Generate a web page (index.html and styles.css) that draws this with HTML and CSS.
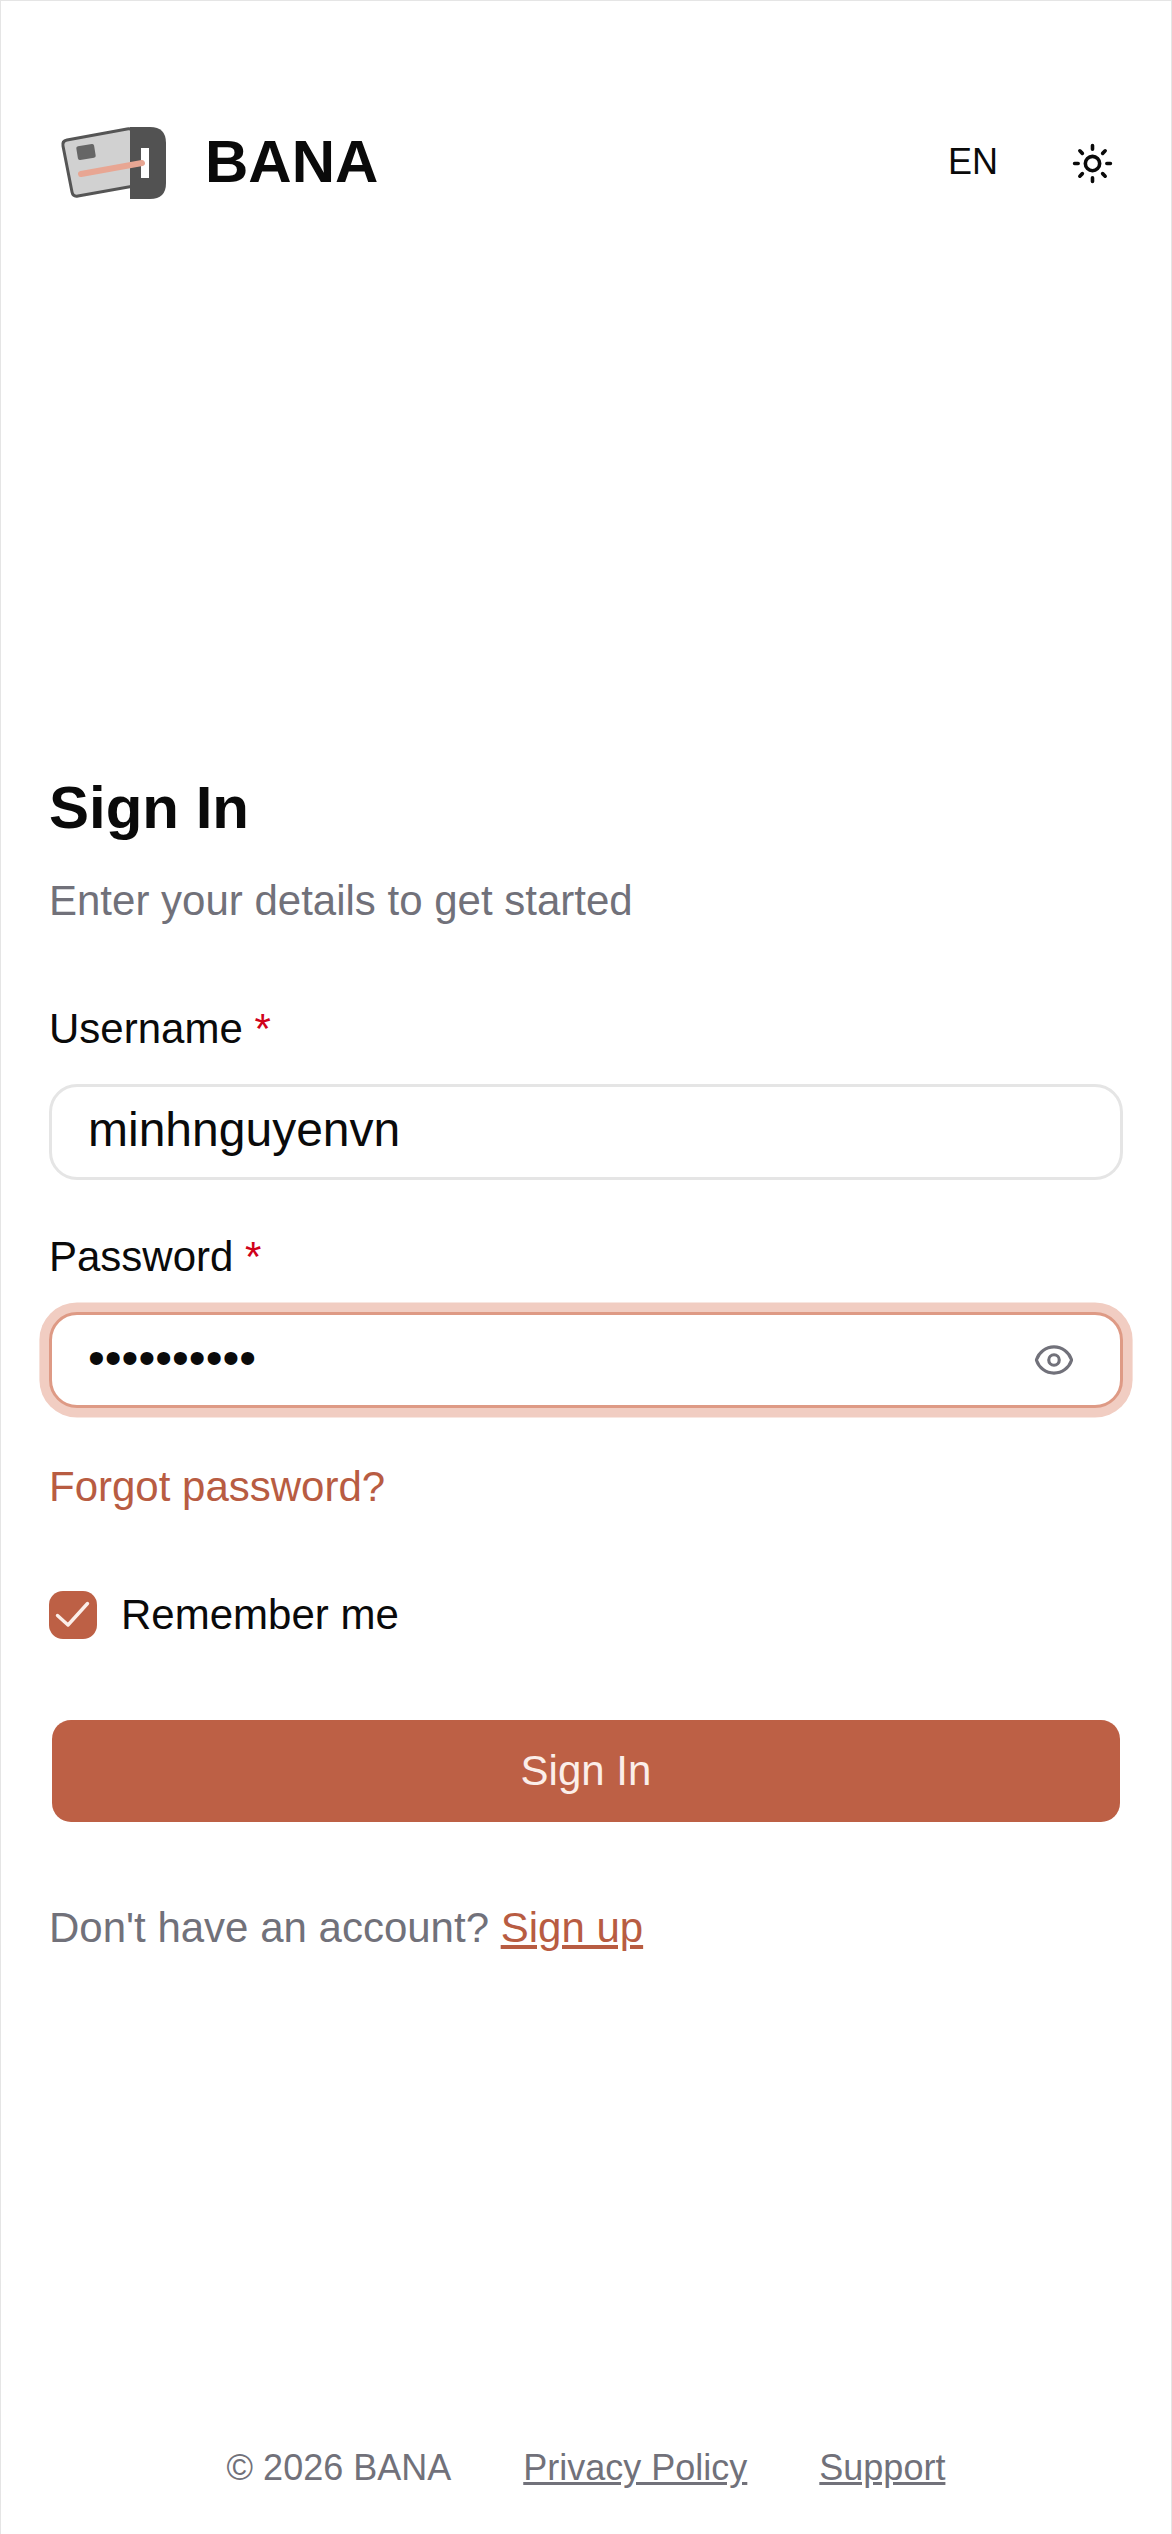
FILE: index.html
```html
<!DOCTYPE html>
<html lang="en">
<head>
  <meta charset="UTF-8">
  <title>Sign In - BANA</title>
  <link rel="stylesheet" href="styles.css">
</head>
<body>
  <div class="page">
    <header class="top-bar">
      <div class="brand">
        <svg class="brand-logo" width="110" height="76" viewBox="58 125 110 76">
          <path d="M67 140 L127 129 Q133 128 134 134 L134 186 L78 196 Q73 197 72 192 L63 146 Q62 141 67 140 Z" fill="#d1d1d1" stroke="#555555" stroke-width="3"/>
          <rect x="77" y="145" width="18" height="14" rx="2" fill="#666666" transform="rotate(-9 86 152)"/>
          <path d="M130 127 H150 Q166 127 166 143 V183 Q166 199 150 199 H130 Z" fill="#525252"/>
          <rect x="141" y="148" width="8" height="30" fill="#ffffff"/>
          <path d="M81 174 L142 163" stroke="#e8a693" stroke-width="6" stroke-linecap="round"/>
        </svg>
        <span class="brand-name">BANA</span>
      </div>
      <div class="top-actions">
        <span class="lang">EN</span>
        <svg class="sun" width="43" height="43" viewBox="0 0 24 24" fill="none" stroke="#0a0a0a" stroke-width="2" stroke-linecap="round">
          <circle cx="12" cy="12" r="4"/>
          <path d="M12 2v2M12 20v2M4.93 4.93l1.41 1.41M17.66 17.66l1.41 1.41M2 12h2M20 12h2M6.34 17.66l-1.41 1.41M19.07 4.93l-1.41 1.41"/>
        </svg>
      </div>
    </header>

    <main class="sign-in">
      <h1>Sign In</h1>
      <p class="subtitle">Enter your details to get started</p>

      <form>
        <label class="field-label" for="username">Username <span class="req">*</span></label>
        <input class="text-input" id="username" type="text" value="minhnguyenvn">

        <label class="field-label" for="password">Password <span class="req">*</span></label>
        <div class="password-wrap">
          <input class="text-input focused" id="password" type="password" value="minhnguyen">
          <svg class="eye" width="42" height="42" viewBox="0 0 24 24" fill="none" stroke="#71717a" stroke-width="1.8" stroke-linecap="round" stroke-linejoin="round">
            <path d="M2.036 12.322a1.012 1.012 0 010-.639C3.423 7.51 7.36 4.5 12 4.5c4.638 0 8.573 3.007 9.963 7.178.07.207.07.431 0 .639C20.577 16.49 16.64 19.5 12 19.5c-4.638 0-8.573-3.007-9.963-7.178z"/>
            <circle cx="12" cy="12" r="3"/>
          </svg>
        </div>

        <a class="forgot" href="#">Forgot password?</a>

        <label class="remember">
          <span class="check-box">
            <svg width="48" height="48" viewBox="0 0 48 48" fill="none" stroke="#fbeee9" stroke-width="3.4" stroke-linecap="round" stroke-linejoin="round">
              <path d="M8.5 24.5 L19 34 L38.5 12.5"/>
            </svg>
          </span>
          Remember me
        </label>

        <button class="submit-button" type="button">Sign In</button>
      </form>

      <p class="signup">Don't have an account? <a href="#">Sign up</a></p>
    </main>

    <footer class="bottom-bar">
      <span>© 2026 BANA</span>
      <a href="#">Privacy Policy</a>
      <a href="#">Support</a>
    </footer>
  </div>
</body>
</html>
```

FILE: styles.css
```css
* {
  box-sizing: border-box;
}

body {
  margin: 0;
  background-color: #ffffff;
  color: #0a0a0a;
  font-family: "Liberation Sans", Arial, sans-serif;
}

.page {
  display: flex;
  flex-direction: column;
  min-height: 2534px;
  border: 1px solid #e5e5e5;
  border-bottom: none;
}

.top-bar {
  display: flex;
  align-items: center;
  justify-content: space-between;
  height: 320px;
  padding: 0 48px 0 57px;
}

.brand {
  display: flex;
  align-items: center;
  gap: 37px;
}

.brand-logo {
  display: block;
  margin-top: 3px;
}

.brand-name {
  font-size: 60px;
  font-weight: 700;
}

.top-actions {
  display: flex;
  align-items: center;
  gap: 73px;
  padding-right: 9px;
}

.lang {
  padding-top: 2px;
  font-size: 36px;
}

.sun {
  display: block;
  margin-top: 4px;
}

.sign-in {
  flex: 1;
  padding: 447px 48px 0;
}

h1 {
  margin: 0;
  font-size: 60px;
  line-height: 80px;
  font-weight: 700;
}

.subtitle {
  margin: 22px 0 0;
  font-size: 42px;
  line-height: 62px;
  color: #71717a;
}

.field-label {
  display: block;
  font-size: 42px;
  line-height: 62px;
  margin-bottom: 24px;
}

form {
  margin-top: 66px;
}

.req {
  color: #d0021b;
}

.text-input {
  display: block;
  width: 100%;
  height: 96px;
  padding: 0 36px 6px;
  border: 3.2px solid #e5e5e5;
  border-radius: 28px;
  background-color: #ffffff;
  color: #0a0a0a;
  font-family: inherit;
  font-size: 48px;
  outline: none;
  margin-bottom: 46px;
}

.password-wrap {
  position: relative;
}

.password-wrap .text-input {
  margin-bottom: 0;
}

.focused {
  border-color: #de9a85;
  box-shadow: 0 0 0 9.6px #f1cdc2;
}

.eye {
  position: absolute;
  right: 48px;
  top: 27px;
}

.forgot {
  display: block;
  margin-top: 48px;
  font-size: 42px;
  line-height: 62px;
  color: #b85c42;
  text-decoration: none;
}

.remember {
  display: flex;
  align-items: center;
  gap: 24px;
  margin-top: 73px;
  font-size: 42px;
  line-height: 48px;
}

.check-box {
  display: block;
  width: 48px;
  height: 48px;
  border-radius: 14px;
  background-color: #bd6045;
}

.check-box svg {
  display: block;
}

.submit-button {
  display: block;
  width: 1068px;
  height: 102px;
  margin: 81px 3px 0;
  border: none;
  border-radius: 19px;
  background-color: #bd6045;
  color: #fbeee9;
  font-family: inherit;
  font-size: 42px;
}

.signup {
  margin: 75px 0 0;
  font-size: 42px;
  line-height: 62px;
  color: #71717a;
}

.signup a {
  color: #b85c42;
}

.bottom-bar {
  display: flex;
  justify-content: center;
  gap: 72px;
  padding-bottom: 44px;
  font-size: 36px;
  line-height: 44px;
  color: #71717a;
}

.bottom-bar a {
  color: #71717a;
}
```
